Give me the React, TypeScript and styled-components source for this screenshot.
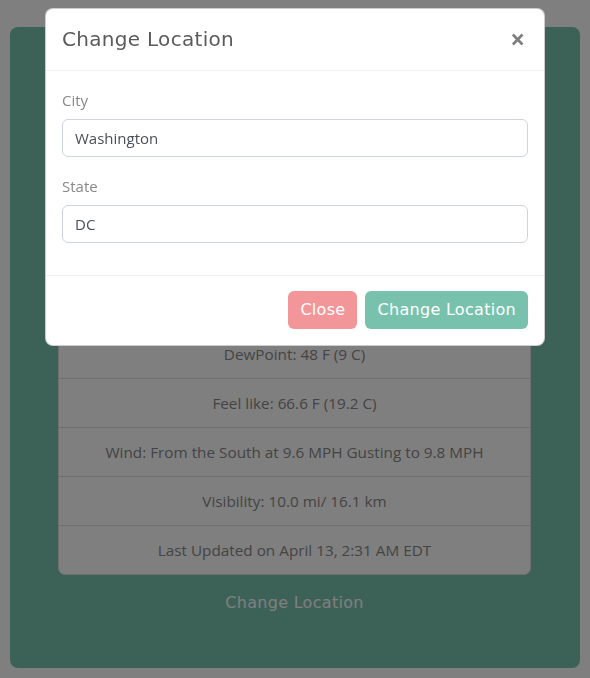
import React from "react";
import styled, { createGlobalStyle } from "styled-components";

const heading = `"DejaVu Sans", "Noto Sans", sans-serif`;
const body = `"Open Sans", "Noto Sans", sans-serif`;

const GlobalStyle = createGlobalStyle`
  html, body {
    margin: 0;
    padding: 0;
    background: #fff;
    font-family: ${body};
    color: #888;
  }
  * {
    box-sizing: border-box;
  }
`;

const weather = [
  "Temperature: 66.6 F (19.2 C)",
  "Relative Humidity: 48%",
  "Pressure: 1012 mb",
  "DewPoint: 48 F (9 C)",
  "Feel like: 66.6 F (19.2 C)",
  "Wind: From the South at 9.6 MPH Gusting to 9.8 MPH",
  "Visibility: 10.0 mi/ 16.1 km",
  "Last Updated on April 13, 2:31 AM EDT",
];

const App: React.FC = () => {
  return (
    <>
      <GlobalStyle />
      <Page>
        <Card>
          <Title>Washington, DC</Title>
          <Temp>67 F</Temp>
          <Condition>Partly Cloudy</Condition>
          <List>
            {weather.map((w) => (
              <Item key={w}>{w}</Item>
            ))}
          </List>
          <LinkButton>Change Location</LinkButton>
        </Card>
      </Page>

      <Backdrop />
      <ModalWrap>
        <Dialog>
          <Header>
            <ModalTitle>Change Location</ModalTitle>
            <CloseX aria-label="Close">×</CloseX>
          </Header>
          <Body>
            <Group>
              <Label>City</Label>
              <Input defaultValue="Washington" />
            </Group>
            <Group>
              <Label>State</Label>
              <Input defaultValue="DC" />
            </Group>
          </Body>
          <Footer>
            <Btn $variant="secondary">Close</Btn>
            <Btn $variant="primary">Change Location</Btn>
          </Footer>
        </Dialog>
      </ModalWrap>
    </>
  );
};

const Page = styled.div`
  height: 100vh;
  padding: 27px 10px 10px;
`;

const Card = styled.div`
  height: 100%;
  background: #78c2ad;
  border-radius: 8px;
  padding: 24px 49px 0 48px;
  text-align: center;
`;

const Title = styled.h2`
  margin: 0 0 8px;
  font-family: ${heading};
  font-size: 32px;
  line-height: 40px;
  font-weight: 400;
  color: #fff;
`;

const Temp = styled.div`
  font-size: 40px;
  line-height: 48px;
  color: #fff;
`;

const Condition = styled.div`
  line-height: 24px;
  margin-bottom: 11px;
  color: #fff;
`;

const List = styled.ul`
  margin: 0;
  padding: 0;
  list-style: none;
  background: #fff;
  border-radius: 7px;
  border: 1px solid #dfdfdf;
  overflow: hidden;
`;

const Item = styled.li`
  padding: 12px 20px;
  font-size: 15.3px;
  line-height: 24px;
  color: #888;
  & + & {
    border-top: 1px solid #dfdfdf;
  }
`;

const LinkButton = styled.button`
  margin-top: 10px;
  padding: 6px 12px;
  border: 0;
  background: transparent;
  font-family: ${heading};
  font-size: 16px;
  line-height: 24px;
  letter-spacing: 0.3px;
  color: #fff;
`;

const Backdrop = styled.div`
  position: fixed;
  inset: 0;
  background: rgba(0, 0, 0, 0.5);
`;

const ModalWrap = styled.div`
  position: fixed;
  inset: 0;
  display: flex;
  justify-content: center;
  align-items: flex-start;
  padding-top: 8px;
`;

const Dialog = styled.div`
  width: 500px;
  background: #fff;
  border: 1px solid rgba(0, 0, 0, 0.2);
  border-radius: 8px;
  overflow: hidden;
`;

const Header = styled.div`
  display: flex;
  align-items: center;
  justify-content: space-between;
  padding: 16px;
  border-bottom: 1px solid #f0f0f0;
`;

const ModalTitle = styled.h5`
  margin: 0;
  font-family: ${heading};
  font-size: 20px;
  line-height: 29px;
  font-weight: 400;
  letter-spacing: 0.3px;
  color: #5a5a5a;
`;

const CloseX = styled.button`
  border: 0;
  background: transparent;
  padding: 0 3px 0 2px;
  font-family: ${body};
  font-size: 26px;
  line-height: 29px;
  font-weight: 700;
  color: #000;
  opacity: 0.5;
`;

const Body = styled.div`
  padding: 16px;
`;

const Group = styled.div`
  margin-bottom: 16px;
`;

const Label = styled.label`
  display: block;
  padding-top: 1px;
  margin-bottom: 7px;
  font-size: 15px;
  line-height: 24px;
  color: #888;
`;

const Input = styled.input`
  display: block;
  width: 100%;
  height: 38px;
  padding: 6px 12px;
  border: 1px solid #ced4da;
  border-radius: 6px;
  font-family: ${body};
  font-size: 15px;
  color: #495057;
  outline: none;
`;

const Footer = styled.div`
  display: flex;
  justify-content: flex-end;
  gap: 8px;
  padding: 15px 16px 16px;
  border-top: 1px solid #f0f0f0;
`;

const Btn = styled.button<{ $variant: "primary" | "secondary" }>`
  height: 38px;
  padding: 6px 12px;
  border: 0;
  border-radius: 6px;
  background: ${(p) => (p.$variant === "primary" ? "#78c2ad" : "#f3969a")};
  font-family: ${heading};
  font-size: 16px;
  line-height: 24px;
  letter-spacing: 0.3px;
  color: #fff;
`;

export default App;
